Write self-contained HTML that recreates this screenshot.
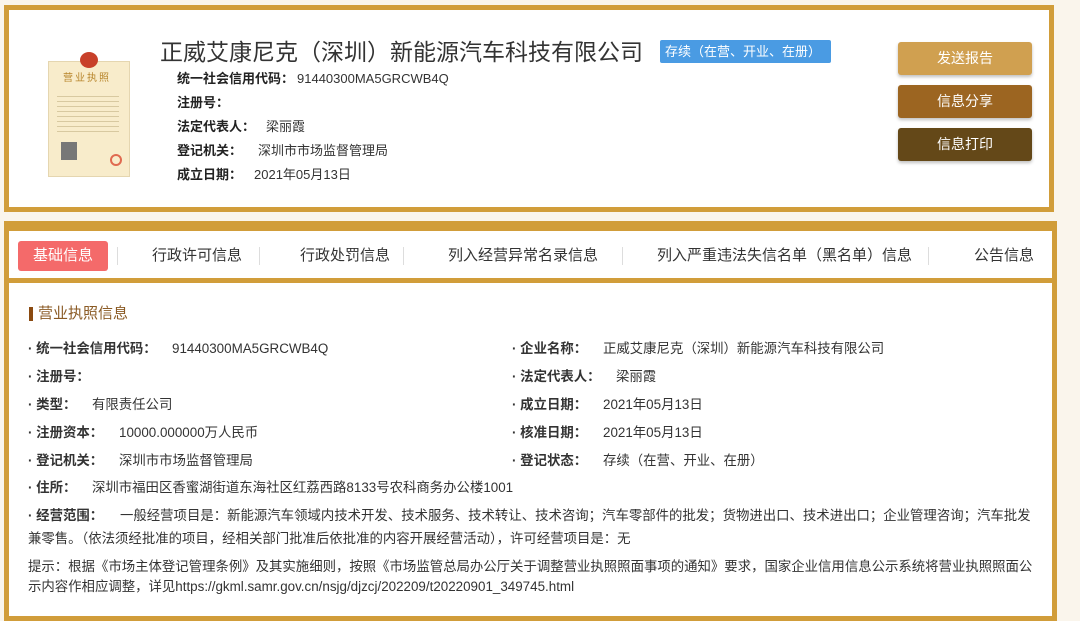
<!DOCTYPE html>
<html><head><meta charset="utf-8">
<style>
*{margin:0;padding:0;box-sizing:border-box}
body{width:1080px;height:597px;overflow:hidden;background:#faf5ec;font-family:"Liberation Sans","Noto Sans CJK SC",sans-serif;color:#333;position:relative}
.a{position:absolute;white-space:nowrap;line-height:18px}
.box1{position:absolute;left:4px;top:5px;width:1050px;height:207px;border:5px solid #d19d3a;background:#fff}
.box2{position:absolute;left:4px;top:221px;width:1053px;height:400px;border:5px solid #d19d3a;border-top-width:10px;background:#fff}
.tabline{position:absolute;left:9px;top:278px;width:1043px;height:5px;background:#d19d3a}
.lbl{font-weight:bold;color:#222;font-size:13px}
.v{font-size:13.4px;color:#333}
.btn{position:absolute;left:898px;width:134px;height:33px;border-radius:3px;color:#fff;font-size:14px;text-align:center;line-height:33px;box-shadow:0 2px 3px rgba(0,0,0,.25)}
.tab{position:absolute;top:246px;font-size:15px;color:#333;line-height:20px}
.sep{position:absolute;top:247px;width:1px;height:18px;background:#ddd}
.row{font-size:13.4px}
</style></head><body>
<div class="box1"></div>
<div class="a" style="left:48px;top:61px;width:82px;height:116px;background:#f8eccb;border:1px solid #e5d6b0"></div>
<div class="a" style="left:80px;top:52px;width:18px;height:16px;border-radius:50%;background:#c8402a"></div>
<div class="a" style="left:63px;top:70px;font-size:10px;color:#b8862c;letter-spacing:2px">营业执照</div>
<div class="a" style="left:57px;top:92px;width:62px;height:44px;background:repeating-linear-gradient(#f8eccb 0 4px,#d8c9a0 4px 5px)"></div>
<div class="a" style="left:61px;top:142px;width:16px;height:18px;background:#777"></div>
<div class="a" style="left:110px;top:154px;width:12px;height:12px;border-radius:50%;border:2px solid #e06a50"></div>

<div class="a" style="left:160px;top:38px;font-size:23px;line-height:28px;color:#333">正威艾康尼克（深圳）新能源汽车科技有限公司</div>
<div class="a" style="left:660px;top:40px;width:171px;height:23px;background:#4a9be3;border-radius:2px;color:#fff;font-size:13px;line-height:23px;padding-left:5px">存续（在营、开业、在册）</div>
<div class="a lbl" style="left:177px;top:70px">统一社会信用代码：</div><div class="a v" style="left:297px;top:70px;font-size:13px">91440300MA5GRCWB4Q</div>
<div class="a lbl" style="left:177px;top:94px">注册号：</div>
<div class="a lbl" style="left:177px;top:118px">法定代表人：</div><div class="a v" style="left:266px;top:118px;font-size:13px">梁丽霞</div>
<div class="a lbl" style="left:177px;top:142px">登记机关：</div><div class="a v" style="left:258px;top:142px;font-size:13px">深圳市市场监督管理局</div>
<div class="a lbl" style="left:177px;top:166px">成立日期：</div><div class="a v" style="left:254px;top:166px;font-size:13px">2021年05月13日</div>

<div class="btn" style="top:42px;background:#d0a050">发送报告</div>
<div class="btn" style="top:85px;background:#9c6521">信息分享</div>
<div class="btn" style="top:128px;background:#644818">信息打印</div>

<div class="box2"></div>
<div class="tabline"></div>
<div class="a" style="left:18px;top:241px;width:90px;height:30px;background:#f46a6a;border-radius:3px;color:#fff;font-size:15px;text-align:center;line-height:30px">基础信息</div>
<div class="sep" style="left:117px"></div>
<div class="tab" style="left:152px">行政许可信息</div>
<div class="sep" style="left:259px"></div>
<div class="tab" style="left:300px">行政处罚信息</div>
<div class="sep" style="left:403px"></div>
<div class="tab" style="left:448px">列入经营异常名录信息</div>
<div class="sep" style="left:622px"></div>
<div class="tab" style="left:657px">列入严重违法失信名单（黑名单）信息</div>
<div class="sep" style="left:928px"></div>
<div class="tab" style="left:974px">公告信息</div>

<div class="a" style="left:29px;top:307px;width:4px;height:14px;background:#8a4a10"></div>
<div class="a" style="left:38px;top:304px;font-size:15px;line-height:20px;color:#8a5a24">营业执照信息</div>

<div class="a row" style="left:28px;top:340px"><b>· 统一社会信用代码：</b></div><div class="a v" style="left:172px;top:340px">91440300MA5GRCWB4Q</div>
<div class="a row" style="left:28px;top:368px"><b>· 注册号：</b></div>
<div class="a row" style="left:28px;top:396px"><b>· 类型：</b></div><div class="a v" style="left:92px;top:396px">有限责任公司</div>
<div class="a row" style="left:28px;top:424px"><b>· 注册资本：</b></div><div class="a v" style="left:119px;top:424px">10000.000000万人民币</div>
<div class="a row" style="left:28px;top:452px"><b>· 登记机关：</b></div><div class="a v" style="left:119px;top:452px">深圳市市场监督管理局</div>
<div class="a row" style="left:28px;top:479px"><b>· 住所：</b></div><div class="a v" style="left:92px;top:479px">深圳市福田区香蜜湖街道东海社区红荔西路8133号农科商务办公楼1001</div>
<div class="a row" style="left:28px;top:507px"><b>· 经营范围：</b></div><div class="a v" style="left:120px;top:507px">一般经营项目是：新能源汽车领域内技术开发、技术服务、技术转让、技术咨询；汽车零部件的批发；货物进出口、技术进出口；企业管理咨询；汽车批发</div>
<div class="a v" style="left:28px;top:530px">兼零售。（依法须经批准的项目，经相关部门批准后依批准的内容开展经营活动），许可经营项目是：无</div>
<div class="a v" style="left:28px;top:558px">提示：根据《市场主体登记管理条例》及其实施细则，按照《市场监管总局办公厅关于调整营业执照照面事项的通知》要求，国家企业信用信息公示系统将营业执照照面公</div>
<div class="a v" style="left:28px;top:578px">示内容作相应调整，详见https://gkml.samr.gov.cn/nsjg/djzcj/202209/t20220901_349745.html</div>

<div class="a row" style="left:512px;top:340px"><b>· 企业名称：</b></div><div class="a v" style="left:603px;top:340px">正威艾康尼克（深圳）新能源汽车科技有限公司</div>
<div class="a row" style="left:512px;top:368px"><b>· 法定代表人：</b></div><div class="a v" style="left:616px;top:368px">梁丽霞</div>
<div class="a row" style="left:512px;top:396px"><b>· 成立日期：</b></div><div class="a v" style="left:603px;top:396px">2021年05月13日</div>
<div class="a row" style="left:512px;top:424px"><b>· 核准日期：</b></div><div class="a v" style="left:603px;top:424px">2021年05月13日</div>
<div class="a row" style="left:512px;top:452px"><b>· 登记状态：</b></div><div class="a v" style="left:603px;top:452px">存续（在营、开业、在册）</div>
</body></html>
